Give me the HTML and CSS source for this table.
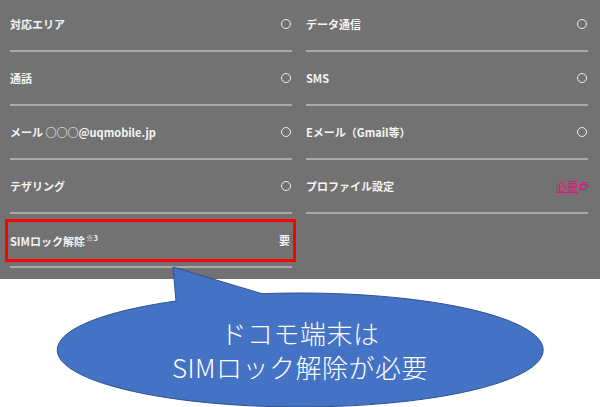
FILE: index.html
```html
<!DOCTYPE html>
<html lang="ja">
  <head>
    <meta charset="UTF-8" />
    <meta name="viewport" content="width=device-width, initial-scale=1" />
    <title>SIMロック解除</title>
    <link rel="stylesheet" href="styles.css">
  </head>
  <body>
    <div class="page">
      <section class="spec">
        <ul class="spec-col">
          <li class="row"><span>対応エリア</span><i class="ok"></i></li>
          <li class="row"><span>通話</span><i class="ok"></i></li>
          <li class="row"><span>メール ○○○@uqmobile.jp</span><i class="ok"></i></li>
          <li class="row"><span>テザリング</span><i class="ok"></i></li>
          <li class="row row-mark">
            <span>SIMロック解除<sup>※3</sup></span><span class="need">要</span>
          </li>
        </ul>
        <ul class="spec-col">
          <li class="row"><span>データ通信</span><i class="ok"></i></li>
          <li class="row"><span>SMS</span><i class="ok"></i></li>
          <li class="row"><span>Eメール（Gmail等）</span><i class="ok"></i></li>
          <li class="row">
            <span>プロファイル設定</span>
            <a class="link" href="#">必要<svg width="8" height="8" viewBox="0 0 8 8"><rect x="2.5" y="0.5" width="5" height="5" fill="none" stroke="currentColor"/><rect x="0.5" y="2.5" width="5" height="5" fill="#727272" stroke="currentColor"/></svg></a>
          </li>
        </ul>
      </section>

      <!-- 吹き出し -->
      <div class="callout">
        <svg class="bubble" width="600" height="407" viewBox="0 0 600 407">
          <path d="M176 301 L173 267 L262 293.7 A243 57 0 1 1 176 301 Z" fill="#4472c4" stroke="#2f528f" stroke-width="1"/>
        </svg>
        <p class="bubble-text"><span>ドコモ端末は</span><span>SIMロック解除が必要</span></p>
      </div>
    </div>
  </body>
</html>
```

FILE: styles.css
```css
/*—— 全域設定 ——*/
body {
  margin: 0;
  background: #ffffff;
  font-family: "Noto Sans CJK JP", "Noto Sans", sans-serif;
}

.page {
  position: relative;
  width: 600px;
  height: 407px;
  overflow: hidden;
}

/*—— 仕様表 ——*/
.spec {
  display: grid;
  grid-template-columns: 282px 282px;
  column-gap: 14px;
  align-items: start;
  height: 279px;
  padding: 0 12px 0 10px;
  background: #727272;
  overflow: hidden;
}

.spec-col {
  list-style: none;
  margin: -2px 0 0;
  padding: 0;
}

.row {
  position: relative;
  display: flex;
  align-items: center;
  justify-content: space-between;
  box-sizing: border-box;
  height: 54px;
  border-bottom: 2px solid #a9a9a9;
  color: #f4f4f4;
  font-size: 11px;
  font-weight: 700;
}

.row sup {
  font-size: 7.5px;
  margin-left: 1px;
  vertical-align: 5px;
}

/*—— ○ 記号 ——*/
.ok {
  width: 8px;
  height: 8px;
  margin-right: 1px;
  border: 1.5px solid #eeeeee;
  border-radius: 50%;
}

.need {
  margin-right: 2px;
}

.row-mark::after {
  content: "";
  position: absolute;
  left: -5px;
  right: -4px;
  top: 5px;
  bottom: 4px;
  border: 3px solid #ff0000;
}

.link {
  display: inline-flex;
  align-items: center;
  gap: 2px;
  color: #e0147f;
  font-weight: 400;
  text-decoration: underline;
}

/*—— 吹き出し ——*/
.callout {
  position: absolute;
  inset: 0;
  pointer-events: none;
}

.bubble {
  position: absolute;
  left: 0;
  top: 0;
}

.bubble-text {
  position: absolute;
  left: 0;
  top: 316px;
  width: 600px;
  margin: 0;
  color: #ffffff;
  font-family: "Noto Sans CJK JP Light", "Noto Sans CJK JP", sans-serif;
  font-size: 26px;
  font-weight: 300;
  line-height: 34px;
  letter-spacing: 0.5px;
  text-align: center;
}

.bubble-text span {
  display: block;
  height: 34px;
}
```
